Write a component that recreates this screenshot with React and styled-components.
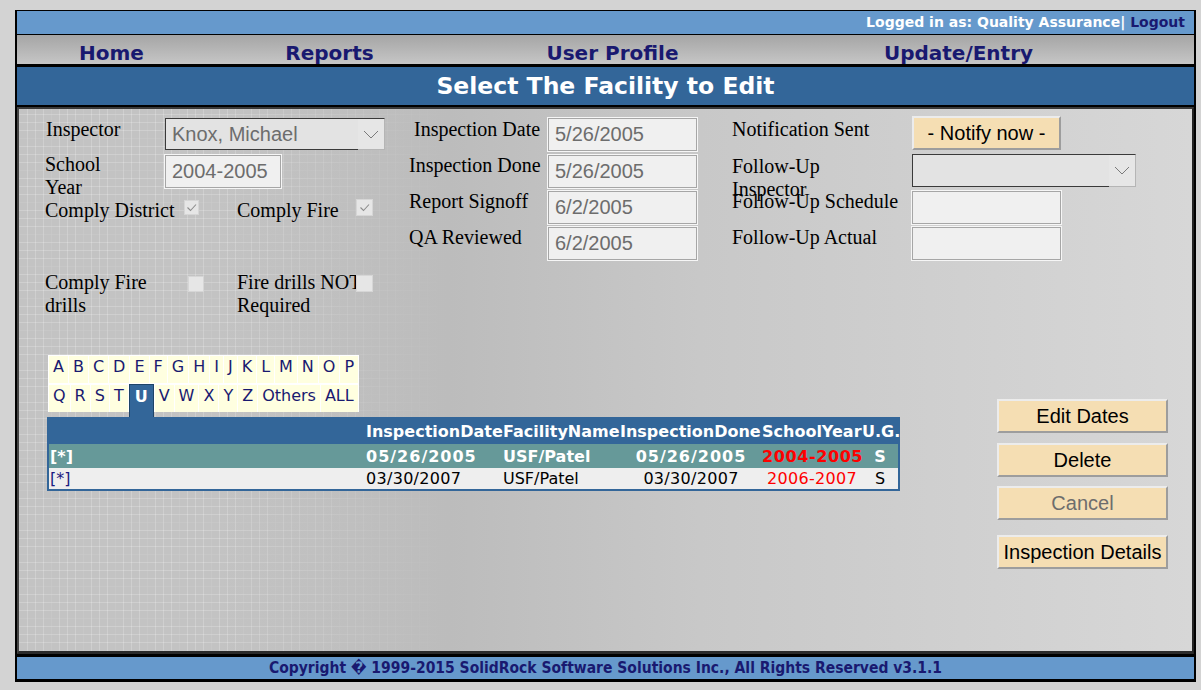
import React from "react";
import styled, { createGlobalStyle } from "styled-components";

const GlobalStyle = createGlobalStyle`
  html, body { margin: 0; padding: 0; background: #d3d3d3; }
  body { font-family: "DejaVu Sans", Verdana, sans-serif; }
  * { box-sizing: border-box; }
`;

const Frame = styled.div`
  margin: 10px 0 0 15px;
  width: 1181px;
  border: 2px solid #000;
  border-top-width: 1px;
  border-bottom-width: 3px;
`;

const TopBar = styled.div`
  height: 24px;
  background: #6699cc;
  border-bottom: 1px solid #000;
  text-align: right;
  padding-right: 9px;
  font-size: 14px;
  font-weight: bold;
  line-height: 23px;
  color: #fff;
`;

const NavLink = styled.a`
  color: #191970;
  text-decoration: none;
  font-weight: bold;
`;

const NavBar = styled.div`
  height: 32px;
  background: linear-gradient(#a5a5a5, #c6c6c6);
  border-bottom: 3px solid #000;
  display: grid;
  grid-template-columns: 189px 247px 319px 373px;
  padding-top: 7px;
  font-size: 20px;
  line-height: 23px;
  text-align: center;
`;

const TitleBar = styled.div`
  height: 40px;
  background: #336699;
  border-bottom: 2px solid #000;
  color: #fff;
  text-align: center;
  font-size: 23.5px;
  font-weight: bold;
  line-height: 39px;
`;

const Panel = styled.div`
  height: 547px;
  border-top: 2px solid #3a3a3a;
  border-left: 2px solid #444;
  border-right: 2px solid #222;
  border-bottom: 3px solid #2b2b2b;
  background-color: #c3c3c3;
  background-image:
    linear-gradient(to right, rgba(192, 192, 192, 0) 0px, rgba(192, 192, 192, 0) 200px, #bcbcbc 430px, #c8c8c8 680px, #d7d7d7 100%),
    repeating-linear-gradient(90deg, rgba(0, 0, 0, 0.04) 0 1px, transparent 1px 32px),
    repeating-linear-gradient(0deg, rgba(0, 0, 0, 0.04) 0 1px, transparent 1px 32px),
    repeating-linear-gradient(90deg, rgba(255, 255, 255, 0.2) 0 1px, transparent 1px 8px),
    repeating-linear-gradient(0deg, rgba(255, 255, 255, 0.2) 0 1px, transparent 1px 8px);
`;

const FormArea = styled.div`
  display: flex;
  padding: 7px 0 0 26px;
  height: 208px;
`;

const Column = styled.div`
  width: ${(p) => p.$width}px;
  margin-left: ${(p) => p.$offset || 0}px;
  display: flex;
  flex-direction: column;
`;

const Row = styled.div`
  display: grid;
  grid-template-columns: ${(p) => p.$cols};
  height: ${(p) => p.$height || 36}px;
  align-items: start;
`;

const Label = styled.div`
  font-family: "Liberation Serif", "Times New Roman", serif;
  font-size: 20px;
  line-height: 23px;
  color: #000;
  padding-top: ${(p) => p.$top ?? 2}px;
  padding-left: ${(p) => p.$indent || 0}px;
  white-space: nowrap;
`;

const TextBox = styled.div`
  width: ${(p) => p.$width || 149}px;
  height: 33px;
  margin-top: ${(p) => p.$top ?? 2}px;
  background: #f0f0f0;
  border: 1px solid #a6a6a6;
  box-shadow: 0 0 0 1px #f6f6f6;
  font-family: "Liberation Sans", Arial, sans-serif;
  font-size: 20px;
  line-height: 31px;
  color: #6d6d6d;
  padding-left: 6px;
`;

const SelectBox = styled.div`
  width: ${(p) => p.$width}px;
  height: ${(p) => p.$height || 32}px;
  margin-top: ${(p) => p.$top ?? 2}px;
  display: flex;
  background: #e3e3e3;
  font-family: "Liberation Sans", Arial, sans-serif;
  font-size: 20px;
  color: #6d6d6d;
`;

const SelectText = styled.div`
  flex: 1;
  border: 1px solid #3a3a3a;
  border-right: none;
  padding-left: 6px;
  line-height: 30px;
`;

const SelectArrow = styled.div`
  width: 27px;
  border-top: 1px solid #3a3a3a;
  border-right: 1px solid #b5b5b5;
  border-bottom: 1px solid #b5b5b5;
  background: #e6e6e6;
  display: flex;
  align-items: center;
  justify-content: center;
`;

const CheckBox = styled.span`
  display: flex;
  align-items: center;
  justify-content: center;
  width: ${(p) => p.$size || 15}px;
  height: ${(p) => p.$size || 15}px;
  margin-top: ${(p) => p.$top || 0}px;
  background: #e6e6e6;
  border: 1px solid #d6d6d6;
`;

const Button = styled.button`
  width: ${(p) => p.$width || 171}px;
  height: 34px;
  margin-top: ${(p) => p.$top || 0}px;
  background: #f5deb3;
  border: 2px solid;
  border-color: #ececec #9d9d9d #9d9d9d #ececec;
  font-family: "Liberation Sans", Arial, sans-serif;
  font-size: 20px;
  color: ${(p) => (p.disabled ? "#6d6d6d" : "#000")};
  padding: 0;
  white-space: nowrap;
`;

const Lower = styled.div`
  display: flex;
  margin-top: 38px;
  padding-left: 28px;
`;

const ListArea = styled.div`
  width: 853px;
`;

const LetterRow = styled.div`
  display: inline-flex;
  gap: 1px;
  background: #fff;
  height: ${(p) => p.$height}px;
  padding: ${(p) => p.$pad}px 1px 0 1px;
  align-items: flex-start;
  margin-left: 1px;
`;

const Letter = styled.a`
  height: 27px;
  padding: 0 4px;
  line-height: 22px;
  font-size: 16px;
  color: #191970;
  background: #ffffe0;
  text-decoration: none;
`;

const ActiveLetter = styled(Letter)`
  height: 33px;
  margin-top: -1px;
  background: #336699;
  border: 1px solid #1d4468;
  border-bottom: none;
  padding: 0 5px;
  line-height: 23px;
  color: #fff;
  font-weight: bold;
`;

const RowBreak = styled.div`
  height: ${(p) => p.$h}px;
`;

const Grid = styled.table`
  width: 853px;
  table-layout: fixed;
  border-collapse: separate;
  border-spacing: 0;
  border: 2px solid #336699;
  font-size: 16px;
`;

const HeadCell = styled.th`
  background: #336699;
  color: #fff;
  font-weight: bold;
  text-align: left;
  white-space: nowrap;
  padding: 0;
  height: 25px;
`;

const DataRow = styled.tr`
  background: ${(p) => (p.$selected ? "#669999" : "#eeeeee")};
  color: ${(p) => (p.$selected ? "#fff" : "#000")};
  font-weight: ${(p) => (p.$selected ? "bold" : "normal")};
  height: ${(p) => (p.$selected ? 24 : 21)}px;
`;

const Cell = styled.td`
  padding: 0 0 0 ${(p) => p.$pad || 0}px;
  text-align: ${(p) => p.$align || "left"};
  white-space: nowrap;
  color: ${(p) => p.$color || "inherit"};
  letter-spacing: ${(p) => p.$spacing || 0}px;
`;

const Actions = styled.div`
  display: flex;
  flex-direction: column;
  margin: 44px 0 0 97px;
`;

const Footer = styled.div`
  height: 25px;
  border-top: 3px solid #000;
  background: #6699cc;
  text-align: center;
  color: #191970;
  font-family: "DejaVu Sans Condensed", "DejaVu Sans", sans-serif;
  font-stretch: condensed;
  font-weight: bold;
  font-size: 15.5px;
  line-height: 22px;
`;

const Chevron = () => (
  <svg width="16" height="9" viewBox="0 0 16 9">
    <polyline points="1,1 8,8 15,1" fill="none" stroke="#7a7a7a" strokeWidth="1" />
  </svg>
);

const Tick = () => (
  <svg width="13" height="13" viewBox="0 0 13 13">
    <polyline points="2.5,6.5 5.5,9.5 11,3.5" fill="none" stroke="#8c8c8c" strokeWidth="1.1" />
  </svg>
);

const row1 = "ABCDEFGHIJKLMNOP".split("");
const row2 = ["Q", "R", "S", "T", "U", "V", "W", "X", "Y", "Z", "Others", "ALL"];

const inspections = [
  { date: "05/26/2005", name: "USF/Patel", done: "05/26/2005", year: "2004-2005", ug: "S", selected: true },
  { date: "03/30/2007", name: "USF/Patel", done: "03/30/2007", year: "2006-2007", ug: "S" },
];

export default function App() {
  return (
    <>
      <GlobalStyle />
      <Frame>
        <TopBar>
          Logged in as: Quality Assurance| <NavLink href="#">Logout</NavLink>
        </TopBar>
        <NavBar>
          <div><NavLink href="#">Home</NavLink></div>
          <div><NavLink href="#">Reports</NavLink></div>
          <div><NavLink href="#">User Profile</NavLink></div>
          <div><NavLink href="#">Update/Entry</NavLink></div>
        </NavBar>
        <TitleBar>Select The Facility to Edit</TitleBar>
        <Panel>
          <FormArea>
            <Column $width={340}>
              <Row $cols="120px 220px">
                <Label $indent={1}>Inspector</Label>
                <SelectBox $width={220}>
                  <SelectText>Knox, Michael</SelectText>
                  <SelectArrow><Chevron /></SelectArrow>
                </SelectBox>
              </Row>
              <Row $cols="120px 116px" $height={47}>
                <Label $top={1}>School<br />Year</Label>
                <TextBox $width={116} $top={3}>2004-2005</TextBox>
              </Row>
              <Row $cols="139px 53px 119px 20px" $height={72}>
                <Label $top={0}>Comply District</Label>
                <CheckBox $top={1}><Tick /></CheckBox>
                <Label $top={0}>Comply Fire</Label>
                <CheckBox $size={17}><Tick /></CheckBox>
              </Row>
              <Row $cols="143px 49px 119px 20px" $height={46}>
                <Label $top={0}>Comply Fire<br />drills</Label>
                <CheckBox $size={16} $top={5} />
                <Label $top={0}>Fire drills NOT<br />Required</Label>
                <CheckBox $size={17} $top={4} />
              </Row>
            </Column>

            <Column $width={288} $offset={24}>
              <Row $cols="139px 149px">
                <Label $indent={5}>Inspection Date</Label>
                <TextBox>5/26/2005</TextBox>
              </Row>
              <Row $cols="139px 149px">
                <Label>Inspection Done</Label>
                <TextBox $top={3}>5/26/2005</TextBox>
              </Row>
              <Row $cols="139px 149px">
                <Label>Report Signoff</Label>
                <TextBox $top={3}>6/2/2005</TextBox>
              </Row>
              <Row $cols="139px 149px">
                <Label>QA Reviewed</Label>
                <TextBox $top={3}>6/2/2005</TextBox>
              </Row>
            </Column>

            <Column $width={410} $offset={35}>
              <Row $cols="180px 230px">
                <Label>Notification Sent</Label>
                <Button $width={149}>- Notify now -</Button>
              </Row>
              <Row $cols="180px 230px">
                <Label $top={3}>Follow-Up<br />Inspector</Label>
                <SelectBox $width={224} $height={33}>
                  <SelectText />
                  <SelectArrow><Chevron /></SelectArrow>
                </SelectBox>
              </Row>
              <Row $cols="180px 230px">
                <Label>Follow-Up Schedule</Label>
                <TextBox $top={3} />
              </Row>
              <Row $cols="180px 230px">
                <Label>Follow-Up Actual</Label>
                <TextBox $top={3} />
              </Row>
            </Column>
          </FormArea>

          <Lower>
            <ListArea>
              <LetterRow $height={29} $pad={1}>
                {row1.map((l) => (
                  <Letter key={l} href="#">{l}</Letter>
                ))}
              </LetterRow>
              <RowBreak $h={0} />
              <LetterRow $height={28} $pad={1}>
                {row2.map((l) =>
                  l === "U" ? (
                    <ActiveLetter key={l} href="#">{l}</ActiveLetter>
                  ) : (
                    <Letter key={l} href="#">{l}</Letter>
                  )
                )}
              </LetterRow>
              <RowBreak $h={5} />
              <Grid>
                <colgroup>
                  <col style={{ width: 317 }} />
                  <col style={{ width: 137 }} />
                  <col style={{ width: 117 }} />
                  <col style={{ width: 142 }} />
                  <col style={{ width: 100 }} />
                  <col style={{ width: 36 }} />
                </colgroup>
                <thead>
                  <tr>
                    <HeadCell />
                    <HeadCell>InspectionDate</HeadCell>
                    <HeadCell>FacilityName</HeadCell>
                    <HeadCell>InspectionDone</HeadCell>
                    <HeadCell>SchoolYear</HeadCell>
                    <HeadCell>U.G.</HeadCell>
                  </tr>
                </thead>
                <tbody>
                  {inspections.map((r) => (
                    <DataRow key={r.date} $selected={r.selected}>
                      <Cell $pad={1} $color={r.selected ? "#fff" : "#1a1a80"}>[*]</Cell>
                      <Cell $spacing={r.selected ? 1 : 0.3}>{r.date}</Cell>
                      <Cell>{r.name}</Cell>
                      <Cell $align="center" $spacing={r.selected ? 1 : 0.3}>{r.done}</Cell>
                      <Cell $align="center" $color="#ff0000" $spacing={r.selected ? 0.6 : 0.3}>{r.year}</Cell>
                      <Cell $align="center">{r.ug}</Cell>
                    </DataRow>
                  ))}
                </tbody>
              </Grid>
            </ListArea>
            <Actions>
              <Button>Edit Dates</Button>
              <Button $top={10}>Delete</Button>
              <Button $top={9} disabled>Cancel</Button>
              <Button $top={15}>Inspection Details</Button>
            </Actions>
          </Lower>
        </Panel>
        <Footer>
          Copyright {"\uFFFD"} 1999-2015 SolidRock Software Solutions Inc., All Rights Reserved v3.1.1
        </Footer>
      </Frame>
    </>
  );
}
